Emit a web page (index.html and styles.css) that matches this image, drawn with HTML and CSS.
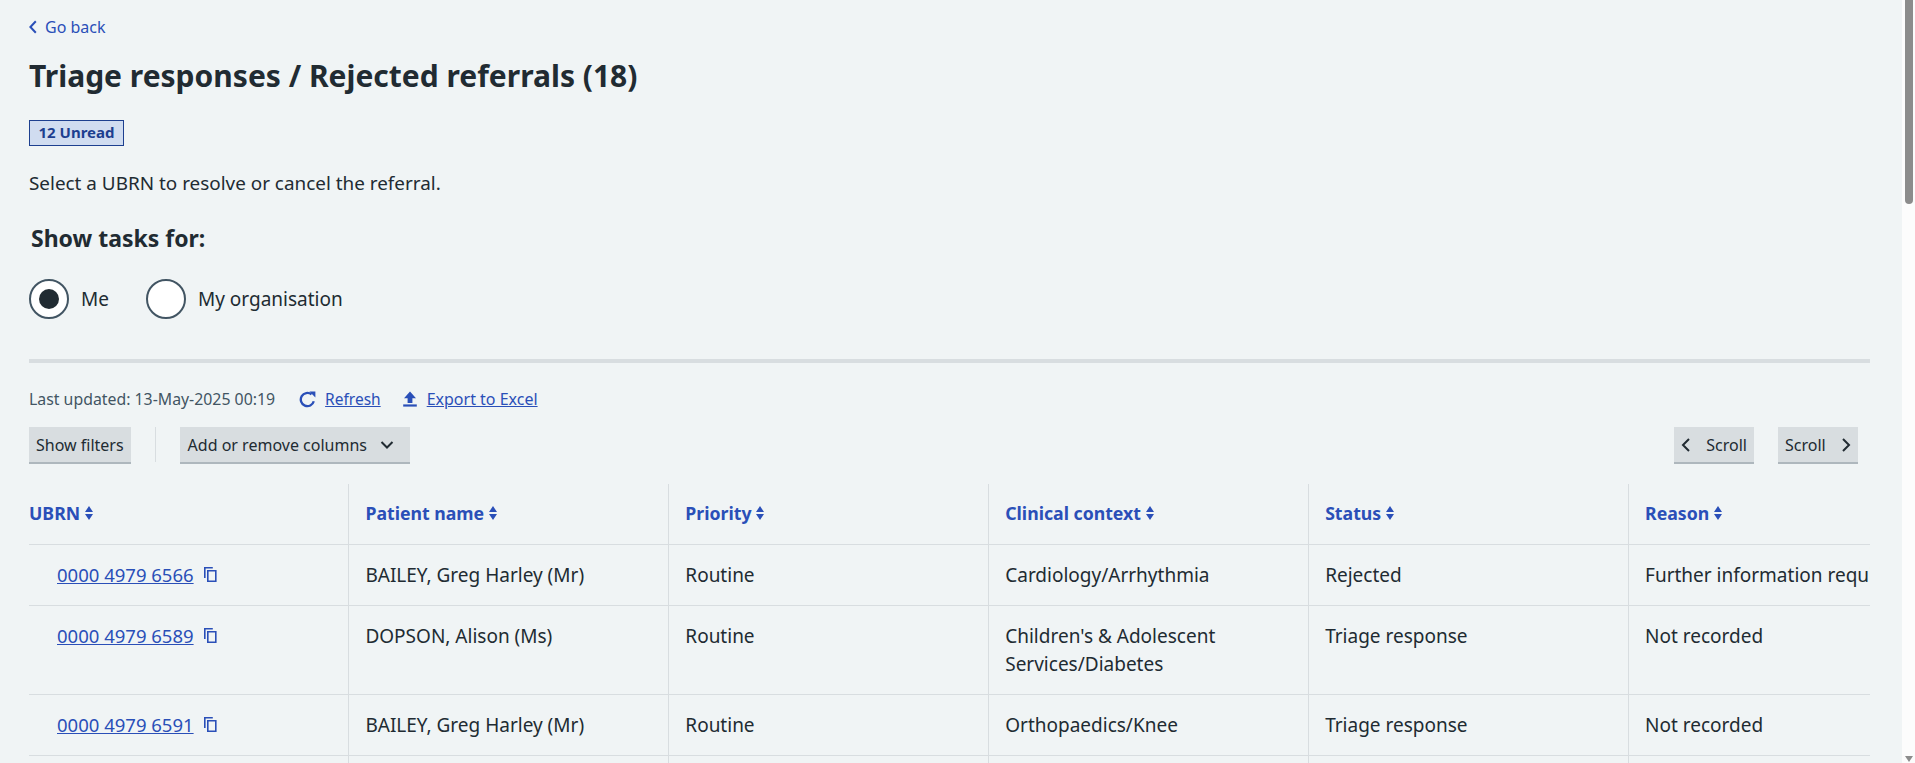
FILE: index.html
```html
<!DOCTYPE html>
<html lang="en">
<head>
  <meta charset="UTF-8">
  <title>Triage responses / Rejected referrals</title>
  <link rel="stylesheet" href="styles.css">
</head>
<body>
  <div class="shell">
    <main class="page">
      <a class="back" href="#">
        <svg class="back-icon" viewBox="0 0 8 14"><path d="M6.8 1.2 1.4 7l5.4 5.8" /></svg>
        Go back
      </a>
      <h1>Triage responses / Rejected referrals (18)</h1>
      <div class="tag">12 Unread</div>
      <p class="hint">Select a UBRN to resolve or cancel the referral.</p>

      <h2>Show tasks for:</h2>
      <div class="radios">
        <label class="radio"><span class="dot checked"></span>Me</label>
        <label class="radio"><span class="dot"></span>My organisation</label>
      </div>

      <hr class="divider">

      <div class="updated">
        <span class="stamp">Last updated: 13-May-2025 00:19</span>
        <a href="#" class="action">
          <svg class="action-icon refresh" viewBox="0 0 16 16"><path class="stroke" d="M13.9 9.6A6.2 6.2 0 1 1 11.8 3.2" /><path class="fill" d="M9.8 0.4 15.4 0.4 15.4 6.2z" /></svg>
          <span class="refresh-text">Refresh</span>
        </a>
        <a href="#" class="action">
          <svg class="action-icon" viewBox="0 0 16 16"><path class="fill" d="M8 0.6 14 7.2 10.4 7.2 10.4 12 5.6 12 5.6 7.2 2 7.2z" /><path class="fill" d="M1.2 13.4h13.6v2.2H1.2z" /></svg>
          <span>Export to Excel</span>
        </a>
      </div>

      <div class="toolbar">
        <button class="btn">Show filters</button>
        <span class="sep"></span>
        <button class="btn btn-cols">Add or remove columns
          <svg class="chev" viewBox="0 0 14 10"><path d="M1.5 2 7 7.5 12.5 2" /></svg>
        </button>
        <div class="scrollers">
          <button class="btn btn-scroll">
            <svg class="chev-side" viewBox="0 0 10 14"><path d="M8 1 2 7l6 6" /></svg>
            Scroll
          </button>
          <button class="btn btn-scroll">
            Scroll
            <svg class="chev-side" viewBox="0 0 10 14"><path d="M2 1l6 6-6 6" /></svg>
          </button>
        </div>
      </div>

      <div class="table-wrap">
        <table>
          <thead>
            <tr>
              <th>UBRN <svg class="sort" viewBox="0 0 8 14"><path d="M4 0 8 6H0zM4 14 0 8h8z" /></svg></th>
              <th>Patient name <svg class="sort" viewBox="0 0 8 14"><path d="M4 0 8 6H0zM4 14 0 8h8z" /></svg></th>
              <th>Priority <svg class="sort" viewBox="0 0 8 14"><path d="M4 0 8 6H0zM4 14 0 8h8z" /></svg></th>
              <th>Clinical context <svg class="sort" viewBox="0 0 8 14"><path d="M4 0 8 6H0zM4 14 0 8h8z" /></svg></th>
              <th>Status <svg class="sort" viewBox="0 0 8 14"><path d="M4 0 8 6H0zM4 14 0 8h8z" /></svg></th>
              <th>Reason <svg class="sort" viewBox="0 0 8 14"><path d="M4 0 8 6H0zM4 14 0 8h8z" /></svg></th>
            </tr>
          </thead>
          <tbody>
            <tr>
              <td class="ubrn"><a href="#">0000 4979 6566</a><svg class="copy" viewBox="0 0 13 15"><path d="M.8 11V.8h8M3.8 3.8h8v10.4h-8z" /></svg></td>
              <td>BAILEY, Greg Harley (Mr)</td>
              <td>Routine</td>
              <td>Cardiology/Arrhythmia</td>
              <td>Rejected</td>
              <td>Further information required</td>
            </tr>
            <tr>
              <td class="ubrn"><a href="#">0000 4979 6589</a><svg class="copy" viewBox="0 0 13 15"><path d="M.8 11V.8h8M3.8 3.8h8v10.4h-8z" /></svg></td>
              <td>DOPSON, Alison (Ms)</td>
              <td>Routine</td>
              <td>Children's &amp; Adolescent Services/Diabetes</td>
              <td>Triage response</td>
              <td>Not recorded</td>
            </tr>
            <tr>
              <td class="ubrn"><a href="#">0000 4979 6591</a><svg class="copy" viewBox="0 0 13 15"><path d="M.8 11V.8h8M3.8 3.8h8v10.4h-8z" /></svg></td>
              <td>BAILEY, Greg Harley (Mr)</td>
              <td>Routine</td>
              <td>Orthopaedics/Knee</td>
              <td>Triage response</td>
              <td>Not recorded</td>
            </tr>
            <tr>
              <td>&nbsp;</td><td></td><td></td><td></td><td></td><td></td>
            </tr>
          </tbody>
        </table>
      </div>
    </main>

    <div class="scrollbar">
      <div class="thumb"></div>
      <svg class="arrow" viewBox="0 0 8 6"><path d="M0 0h8L4 6z" /></svg>
    </div>
  </div>
</body>
</html>
```

FILE: styles.css
```css
:root {
  --bg: #f0f4f5;
  --text: #212b32;
  --secondary: #425563;
  --link: #2a4fb8;
  --border: #d8dde0;
  --btn: #d8dde0;
  --btn-edge: #aeb7bd;
}

* { box-sizing: border-box; }

html, body { height: 100%; }

body {
  margin: 0;
  background: var(--bg);
  color: var(--text);
  font-family: "Noto Sans", "Open Sans", sans-serif;
  font-size: 19px;
  overflow: hidden;
}

a { color: var(--link); }

.shell {
  display: flex;
  height: 763px;
  overflow: hidden;
}

.page {
  flex: 1;
  min-width: 0;
  padding: 15px 32px 0 29px;
}

/* ---------------- Header ---------------- */
.back {
  display: flex;
  align-items: center;
  gap: 8px;
  height: 24px;
  font-size: 16px;
  text-decoration: none;
}
.back-icon { width: 8px; height: 14px; }
.back-icon path { fill: none; stroke: var(--link); stroke-width: 2; }

h1 {
  margin: 15px 0 0;
  font-size: 30px;
  line-height: 44px;
  font-weight: 700;
}

.tag {
  width: 95px;
  height: 26px;
  margin-top: 22px;
  border: 1px solid #1d3f8f;
  background: #d0dcf0;
  color: #1d3f8f;
  font-size: 15px;
  font-weight: 700;
  line-height: 23px;
  text-align: center;
}

.hint {
  margin: 23px 0 0;
  font-size: 18.9px;
  line-height: 28px;
}

h2 {
  margin: 25px 0 0 2px;
  font-size: 23px;
  line-height: 32px;
  font-weight: 700;
}

.radios {
  display: flex;
  gap: 37px;
  margin-top: 25px;
}
.radio {
  display: flex;
  align-items: center;
  gap: 12px;
  height: 40px;
  line-height: 42px;
}
.dot {
  display: flex;
  align-items: center;
  justify-content: center;
  width: 40px;
  height: 40px;
  border: 2px solid var(--secondary);
  border-radius: 50%;
  background: #fff;
}
.dot.checked::after {
  content: "";
  width: 20px;
  height: 20px;
  border-radius: 50%;
  background: var(--text);
}

.divider {
  height: 4px;
  margin: 40px 0 0;
  border: 0;
  background: var(--border);
}

/* ---------------- Actions ---------------- */
.updated {
  display: flex;
  align-items: center;
  height: 24px;
  margin-top: 24px;
  font-size: 16px;
}
.stamp { color: var(--secondary); font-size: 15.85px; margin-right: 24px; }
.action {
  display: flex;
  align-items: center;
  gap: 9px;
  margin-right: 21px;
}
.action-icon { width: 16px; height: 16px; }
.refresh { width: 17px; height: 17px; }
.refresh-text { font-size: 15.5px; }
.stroke { fill: none; stroke: var(--link); stroke-width: 2.2; }
.fill { fill: var(--link); }

.toolbar {
  display: flex;
  align-items: flex-start;
  margin-top: 16px;
}
.btn {
  display: flex;
  align-items: center;
  height: 37px;
  padding: 0 7px;
  border: 0;
  border-bottom: 2px solid var(--btn-edge);
  background: var(--btn);
  color: var(--text);
  font-family: inherit;
  font-size: 16px;
}
.sep {
  width: 1px;
  height: 35px;
  margin: 0 24px;
  background: var(--border);
}
.btn-cols { gap: 13px; width: 230px; padding-left: 8px; }
.chev { width: 14px; height: 10px; }
.chev path { fill: none; stroke: var(--text); stroke-width: 2; }
.scrollers {
  display: flex;
  gap: 24px;
  margin-left: auto;
  margin-right: 12px;
}
.btn-scroll { width: 80px; justify-content: space-between; }
.chev-side { width: 10px; height: 14px; }
.chev-side path { fill: none; stroke: var(--text); stroke-width: 2; }

/* ---------------- Table ---------------- */
.table-wrap {
  margin-top: 20px;
  overflow: hidden;
}
table {
  width: 1920px;
  border-collapse: collapse;
  table-layout: fixed;
  line-height: 28px;
}
th, td {
  padding: 16px;
  border-right: 1px solid var(--border);
  border-bottom: 1px solid var(--border);
  text-align: left;
  vertical-align: top;
  font-weight: 400;
}
th {
  height: 60px;
  padding-top: 15px;
  color: var(--link);
  font-weight: 700;
  font-size: 17.7px;
}
th:first-child { padding-left: 0; }
.sort { width: 8px; height: 14px; fill: var(--link); }
.ubrn { padding-left: 28px; white-space: nowrap; font-size: 18.5px; }
.copy { width: 13px; height: 15px; margin-left: 10px; fill: none; stroke: var(--link); stroke-width: 1.6; }
td:last-child { white-space: nowrap; }

/* ---------------- Scrollbar ---------------- */
.scrollbar {
  display: flex;
  flex-direction: column;
  align-items: center;
  justify-content: space-between;
  width: 13px;
  padding-bottom: 1px;
  background: #fcfcfc;
}
.thumb {
  width: 8px;
  height: 204px;
  border-radius: 0 0 4px 4px;
  background: #8c8c8c;
}
.arrow { width: 8px; height: 6px; fill: #8c8c8c; }
```
